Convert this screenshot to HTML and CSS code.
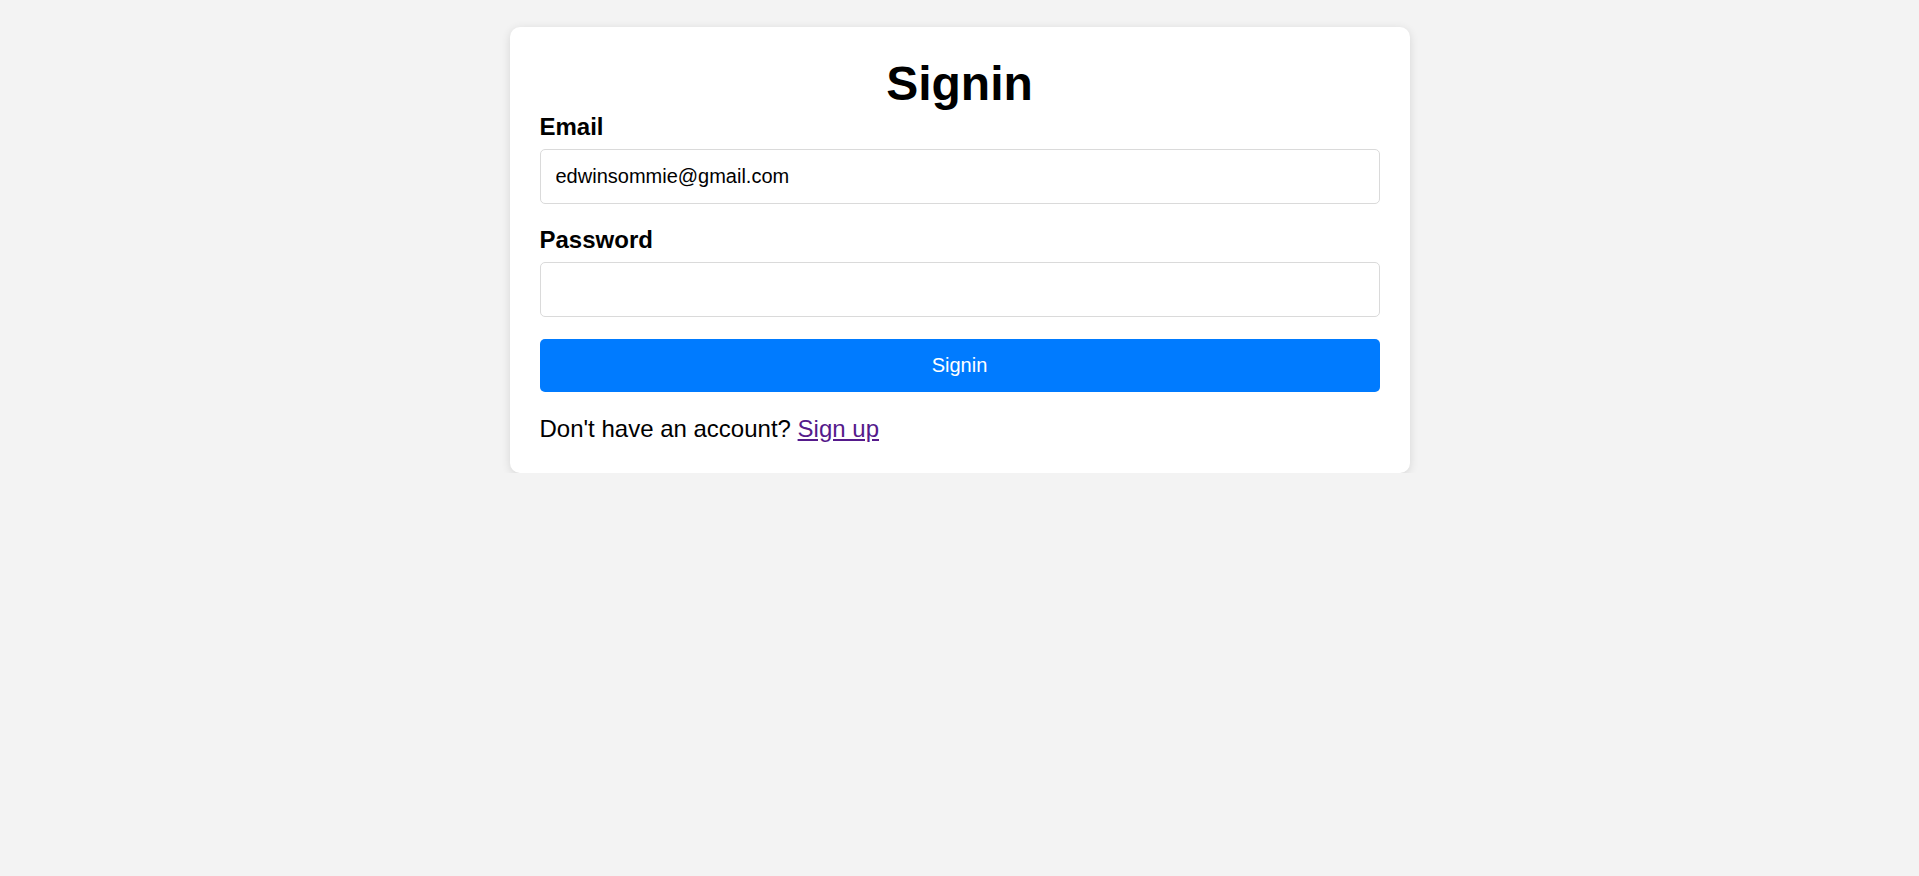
FILE: index.html
```html
<!DOCTYPE html>
<html lang="en">
<head>
<meta charset="utf-8">
<title>Signin</title>
<link rel="stylesheet" href="styles.css">
</head>
<body>
  <div class="card">
    <h1 class="title">Signin</h1>
    <form class="form">
      <div class="group">
        <label class="label" for="email">Email</label>
        <input class="input" id="email" type="email" value="edwinsommie@gmail.com">
      </div>
      <div class="group">
        <label class="label" for="password">Password</label>
        <input class="input" id="password" type="password">
      </div>
      <button class="btn" type="button">Signin</button>
    </form>
    <p class="foot">Don't have an account? <a class="link" href="#">Sign up</a></p>
  </div>
</body>
</html>
```

FILE: styles.css
```css
html, body {
  margin: 0;
  padding: 0;
}
body {
  background: #f3f3f3;
  font-family: "Liberation Sans", Arial, sans-serif;
  color: #000;
  padding-top: 27px;
}
.card {
  width: 900px;
  box-sizing: border-box;
  margin: 0 auto;
  background: #fff;
  border-radius: 10px;
  box-shadow: 0 2px 10px rgba(0, 0, 0, 0.12);
  padding: 30px 30px 30px;
}
.title {
  margin: 0;
  text-align: center;
  font-size: 48px;
  font-weight: bold;
  line-height: 53px;
  padding-bottom: 3px;
}
.form {
  display: flex;
  flex-direction: column;
}
.group {
  display: flex;
  flex-direction: column;
  margin-bottom: 22px;
}
.label {
  font-size: 24px;
  font-weight: bold;
  line-height: 28px;
  margin-bottom: 8px;
}
.input {
  font-family: "Liberation Sans", Arial, sans-serif;
  font-size: 20px;
  line-height: 23px;
  padding: 15px 15px;
  border: 1px solid #dadada;
  border-radius: 5px;
  color: #000;
  background: #fff;
  outline: none;
}
.btn {
  font-family: "Liberation Sans", Arial, sans-serif;
  font-size: 20px;
  line-height: 23px;
  padding: 15px;
  border: none;
  border-radius: 5px;
  background: #007bff;
  color: #fff;
}
.foot {
  margin: 23px 0 0;
  font-size: 24px;
  line-height: 28px;
}
.link {
  color: #551a8b;
  text-decoration: underline;
}
```
